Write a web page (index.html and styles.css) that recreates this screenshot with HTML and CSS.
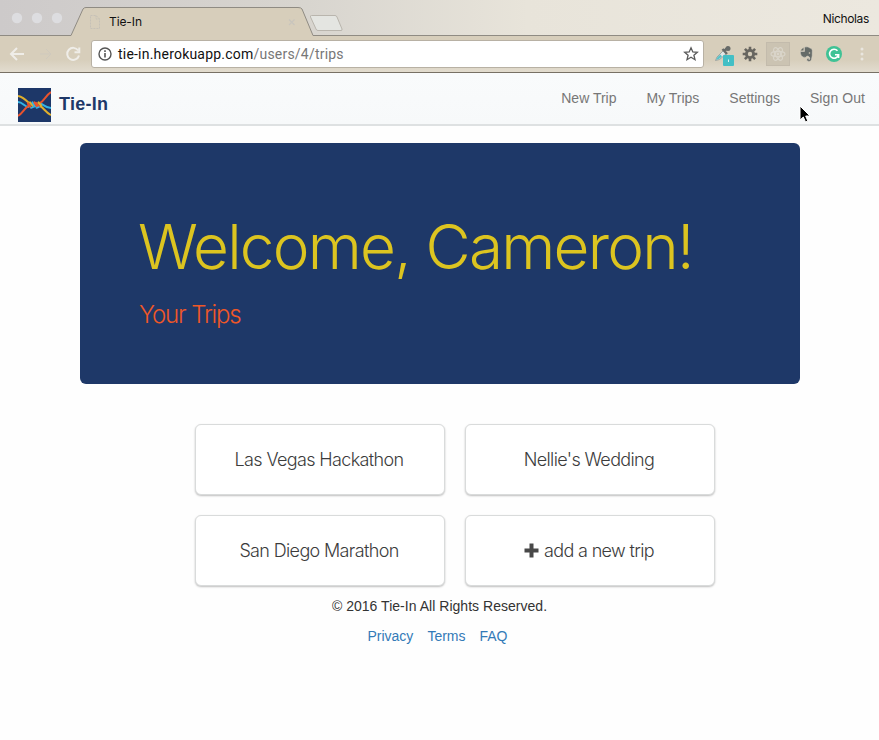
FILE: index.html
```
<!DOCTYPE html>
<html lang="en">
<head>
<meta charset="utf-8">
<title>Tie-In</title>
<link rel="stylesheet" href="styles.css">
</head>
<body>
<div class="browser">
  <div class="tabstrip">
    <svg class="tabshape" width="879" height="36" viewBox="0 0 879 36">
      <path d="M0 36V35.5H71L83 9Q84 7.500 86 7.500H298Q301 7.500 302 9L313 35.500H879V36Z" fill="#d7cebb"/>
      <path d="M0 35.500H71L83 9Q84 7.500 86 7.500H298Q301 7.500 302 9L313 35.500H879" fill="none" stroke="#8f8b83"/>
      <circle cx="17" cy="18" r="5.200" fill="#dddde0"/><circle cx="37" cy="18" r="5.200" fill="#dddde0"/><circle cx="57" cy="18" r="5.200" fill="#dddde0"/>
      <path d="M90.500 15.500H96L99.500 19V28.500H90.500ZM96 15.500V19H99.500" fill="none" stroke="#c6c1b7" stroke-dasharray="2 1"/>
      <path d="M289 19.500L294.500 25M294.500 19.500L289 25" stroke="#c9c5bd" stroke-width="1.300"/>
      <path d="M311.500 15.500H335Q336.500 15.500 337 17L342 29Q342.500 30.500 341 30.500H318Q316.500 30.500 316 29L310.500 17Q310 15.500 311.500 15.500Z" fill="#e4e5e1" stroke="#b9b5ad"/>
    </svg>
    <span class="tabtitle">Tie-In</span>
    <span class="profile">Nicholas</span>
  </div>
  <div class="toolbar">
    <svg class="navicons" width="91" height="36" viewBox="0 0 91 36" fill="none" stroke="#efede8" stroke-width="2">
      <path d="M24 18H11M17 12L11 18L17 24"/>
      <path d="M40 18H51M46 13L51 18L46 23" stroke="#cfc9bd" stroke-width="1"/>
      <path d="M78.200 14.500A6 6 0 1 0 79 19.500M79.300 11.500V16.300H74.500"/>
    </svg>
    <div class="address">
      <svg width="14" height="14" viewBox="0 0 14 14"><circle cx="7" cy="7" r="6" fill="none" stroke="#555" stroke-width="1.400"/><path d="M7 6V10.500M7 3.300V4.900" stroke="#555" stroke-width="1.600"/></svg>
      <span class="url"><b>tie-in.herokuapp.com</b>/users/4/trips</span>
      <svg class="star" width="16" height="16" viewBox="0 0 16 16"><path d="M8 1.800L9.800 6L14.300 6.300L10.900 9.200L12 13.700L8 11.300L4 13.700L5.100 9.200L1.700 6.300L6.200 6Z" fill="none" stroke="#5a5a5a" stroke-width="1.300"/></svg>
    </div>
    <svg class="extensions" width="175" height="36" viewBox="704 36 175 36">
      <path d="M715.500 60.500L717 57L723.500 50.500L726.500 53.500L719.500 59.500Z" fill="#e3e7e5" stroke="#8f9895" stroke-width=".8"/><path d="M716 60L717.500 57L720.500 54.500L722 56.500L719 59Z" fill="#59c2c8"/>
      <path d="M722.500 49L727 54M724 51L728 47.500" fill="none" stroke="#676b69" stroke-width="2.400"/><circle cx="728" cy="48.500" r="2.500" fill="#676b69"/>
      <rect x="723" y="55" width="11" height="11" rx="1" fill="#43bfc5"/><path d="M728.500 59.500V62" stroke="#dff6f5"/>
      <g stroke="#686660" stroke-width="2.600"><path d="M750 46.700V61.300M742.700 54H757.300M744.900 48.900L755.100 59.100M755.100 48.900L744.900 59.100"/></g><circle cx="750" cy="54" r="5" fill="#686660"/><circle cx="750" cy="54" r="2.200" fill="#d7cebb"/>
      <rect x="766.500" y="42.500" width="23" height="23" fill="#cbc3b2" stroke="#c3bbac"/>
      <g fill="none" stroke="#dad5ca" stroke-width="1.200"><ellipse cx="778" cy="54" rx="7" ry="2.700"/><ellipse cx="778" cy="54" rx="7" ry="2.700" transform="rotate(60 778 54)"/><ellipse cx="778" cy="54" rx="7" ry="2.700" transform="rotate(120 778 54)"/></g><circle cx="778" cy="54" r="1.400" fill="#dad5ca"/>
      <path d="M804.500 47Q808 46.300 810 48Q812.300 48.300 812.300 50.500Q812.600 56 811.300 60Q810.500 62 808 61.300Q806 60.500 807 58.500L809 58.300V60L810 58Q809 56 807 56Q806 58 803.500 57.200Q800.500 56.500 800.300 51.500H804.500Z" fill="#656b68" stroke="#dcd7cb" stroke-width=".5"/><path d="M800.500 50.500L803.500 47.500V50.500Z" fill="#656b68"/><circle cx="809.500" cy="53" r=".8" fill="#d7cebb"/>
      <circle cx="834" cy="54" r="8" fill="#3fc295"/><path d="M837.500 50.800A4.500 4.500 0 1 0 838.500 54.800H835M838.600 54.800V58" fill="none" stroke="#fff" stroke-width="1.600"/>
      <g fill="#e9e6df"><circle cx="862" cy="49" r="1.500"/><circle cx="862" cy="54" r="1.500"/><circle cx="862" cy="59" r="1.500"/></g>
    </svg>
  </div>
</div>
<header class="navbar">
  <a class="brand">
    <svg width="33" height="34" viewBox="0 0 33 34"><rect width="33" height="34" fill="#1d3768"/>
      <g fill="none" stroke-width="2">
        <path d="M0 8C5 9 8 12 11 15M22 18C26 20 28 25 33 27" stroke="#dfaf2c"/>
        <path d="M0 14C5 14 6 19 11 19M22 15C26 17 28 20 33 20" stroke="#33b4e5"/>
        <path d="M0 28C5 25 7 19 11 18M22 15C26 13 28 7 33 4" stroke="#e9532d"/>
      </g>
      <g fill="none" stroke-width="2.200" stroke-linecap="round">
        <path d="M10 15.500L12.500 19M18 15L21 18.500" stroke="#e9532d"/>
        <path d="M12 14.500L15 18M20.500 14.500L23 17.500" stroke="#dfaf2c"/>
        <path d="M14.500 14.500L17 18.500" stroke="#33b4e5"/>
        <path d="M16.500 14.500L19 18.500" stroke="#e9532d"/>
        <path d="M13 20L15.500 19M18.500 20L21 19" stroke="#33b4e5" stroke-width="1.500"/>
      </g>
    </svg>
    <span class="brandname">Tie-In</span>
  </a>
  <nav><a>New Trip</a><a>My Trips</a><a>Settings</a><a class="signout">Sign Out</a></nav>
</header>
<main>
  <section class="hero">
    <h1>Welcome, Cameron!</h1>
    <h2>Your Trips</h2>
  </section>
  <section class="trips">
    <a class="card">Las Vegas Hackathon</a>
    <a class="card">Nellie's Wedding</a>
    <a class="card">San Diego Marathon</a>
    <a class="card"><svg width="15" height="15" viewBox="0 0 15 15"><path d="M7.500 .5V14.500M.5 7.500H14.500" stroke="#484848" stroke-width="4"/></svg><span>add a new trip</span></a>
  </section>
</main>
<footer>
  <p>© 2016 Tie-In All Rights Reserved.</p>
  <div class="links"><a>Privacy</a><a>Terms</a><a>FAQ</a></div>
</footer>
<svg class="cursor" width="13" height="19" viewBox="0 0 13 19"><path d="M1 1V15L4.300 12L6.500 17L8.800 16L6.700 11H11Z" fill="#000" stroke="#fff"/></svg>
</body>
</html>
```
FILE: styles.css
```
* { box-sizing: border-box; }
body {
  margin: 0;
  height: 740px;
  overflow: hidden;
  background: #fefefe;
  color: #333;
  font: 14px/20px "Liberation Sans", Arial, sans-serif;
}
svg { display: block; flex: none; }
h1, h2, p { margin: 0; }
.browser { height: 73px; border-bottom: 1px solid #777064; }
.tabstrip {
  position: relative;
  height: 36px;
  display: flex;
  align-items: center;
  justify-content: space-between;
  padding: 2px 10px 0 109px;
  background: linear-gradient(90deg, #cdcaca 0, #d8d5cf 35%, #e8e4da 60%, #ece8df 100%);
}
.tabshape { position: absolute; left: 0; top: 0; }
.tabtitle, .profile { position: relative; color: #111; font: 12px/16px Inter, Roboto, sans-serif; }
.tabtitle { top: 3px; letter-spacing: -.1px; }
.profile { letter-spacing: -.35px; }
.toolbar {
  height: 36px;
  display: flex;
  align-items: center;
  background: linear-gradient(#d7cebb 65%, #e2dccf);
}
.address {
  width: 613px;
  height: 28px;
  display: flex;
  align-items: center;
  padding: 0 4px 0 6px;
  background: #fff;
  border: 1px solid #b8b1a4;
  border-radius: 3px;
}
.url { margin-left: 6px; color: #777; font: 14px/20px Roboto, sans-serif; letter-spacing: .21px; white-space: nowrap; }
.url b { color: #111; font-weight: 400; }
.star { margin-left: auto; }
.navbar {
  height: 53px;
  display: flex;
  justify-content: space-between;
  background: linear-gradient(#f9fbfc, #f7f9fa);
  border-bottom: 2px solid #dee1e2;
  padding: 15px 14px 0 18px;
}
.brand { display: flex; gap: 8px; }
.brandname { color: #1e3868; font-size: 18px; font-weight: 700; line-height: 32px; letter-spacing: .25px; }
nav { display: flex; gap: 30px; color: #777; white-space: nowrap; }
.signout { letter-spacing: .07px; }
main { width: 720px; margin: 17px 0 0 80px; }
.hero { height: 241px; padding: 70px 60px 0 58px; border-radius: 6px; background: #1e3868; white-space: nowrap; }
.hero h1 { color: #dcc420; font: 300 62px/68px Inter, sans-serif; letter-spacing: -1.77px; }
.hero h2 { margin: 20px 0 0 1px; color: #ef5727; font: 300 24px/28px Inter, sans-serif; letter-spacing: -1.15px; }
.trips {
  display: grid;
  grid-template-columns: 250px 250px;
  gap: 20px;
  margin: 40px 0 0 115px;
}
.card {
  height: 71px;
  display: flex;
  align-items: center;
  justify-content: center;
  gap: 5px;
  padding-right: 2px;
  background: #fff;
  border: 1px solid #d9dbdb;
  border-radius: 6px;
  box-shadow: 0 1px 2px rgba(0, 0, 0, .25);
  color: #3c3c3c;
  font: 300 18px/24px Inter, sans-serif;
  letter-spacing: -.64px;
  white-space: nowrap;
}
footer { width: 879px; text-align: center; padding-top: 10px; letter-spacing: .03px; }
.links { display: flex; justify-content: center; gap: 14px; margin: 10px 4px 0 0; color: #337ab7; letter-spacing: 0; }
.cursor { position: absolute; left: 799px; top: 105px; }
```
